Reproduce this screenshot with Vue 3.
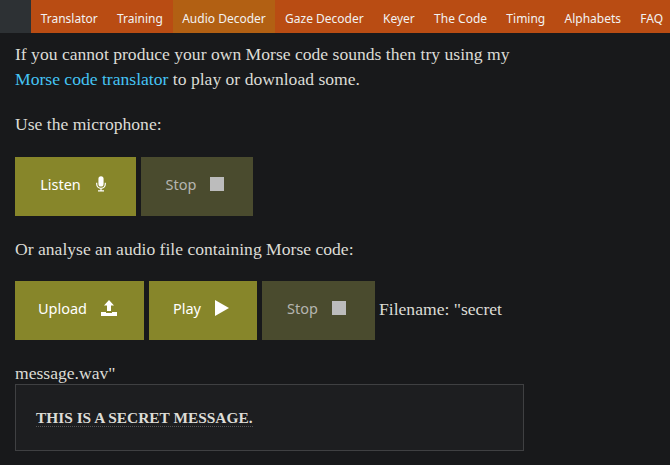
<script setup>
const navItems = [
  { label: 'Translator' },
  { label: 'Training' },
  { label: 'Audio Decoder', active: true },
  { label: 'Gaze Decoder' },
  { label: 'Keyer' },
  { label: 'The Code' },
  { label: 'Timing' },
  { label: 'Alphabets' },
  { label: 'FAQ' },
]
</script>

<template>
  <div class="page">
    <header class="topbar">
      <div class="logo-slot"></div>
      <nav class="nav">
        <a v-for="item in navItems" :key="item.label" class="nav-item" :class="{ active: item.active }">{{ item.label }}</a>
      </nav>
    </header>
    <main class="content">
      <p class="intro">If you cannot produce your own Morse code sounds then try using my<br><a class="link">Morse code translator</a> to play or download some.</p>
      <p class="label">Use the microphone:</p>
      <div class="btn-row">
        <button class="btn w-listen">Listen
          <svg class="icon" viewBox="0 0 14 18" width="12" height="16"><path fill="currentColor" d="M7 0a3 3 0 0 0-3 3v6a3 3 0 0 0 6 0V3a3 3 0 0 0-3-3z"/><path fill="none" stroke="currentColor" stroke-width="1.4" d="M2 7.5V9a5 5 0 0 0 10 0V7.5M7 14v3M3.5 17h7"/></svg>
        </button>
        <button class="btn off w-stop">Stop <span class="square"></span></button>
      </div>
      <p class="label second">Or analyse an audio file containing Morse code:</p>
      <div class="btn-row file-row">
        <button class="btn w-upload">Upload
          <svg class="icon" viewBox="0 0 16 16" width="16" height="16"><path fill="currentColor" d="M8 0l5 5.5H10V11H6V5.5H3zM0 12h5v1h6v-1h5v4H0z"/></svg>
        </button>
        <button class="btn w-play">Play
          <svg class="icon" viewBox="0 0 14 16" width="14" height="16"><path fill="currentColor" d="M0 0l14 8-14 8z"/></svg>
        </button>
        <button class="btn off w-stop2">Stop <span class="square"></span></button>
        <span class="filename">Filename: "secret</span>
      </div>
      <p class="filename-end">message.wav"</p>
      <div class="output"><span class="message">THIS IS A SECRET MESSAGE.</span></div>
    </main>
  </div>
</template>

<style>
html, body { margin: 0; background: #18191b; }
</style>

<style scoped>
.page {
  width: 670px;
  height: 465px;
  overflow: hidden;
  background: #18191b;
  color: #dcdcd6;
  font-family: "Liberation Serif", serif;
  font-size: 17.6px;
  line-height: 25px;
}
.topbar { display: flex; height: 33px; background: #b94c13; }
.logo-slot { flex: none; width: 31px; background: #2d3134; }
.nav { display: flex; flex: none; }
.nav-item {
  display: block;
  padding: 0 9.65px;
  color: #f2f2f2;
  font-family: "Noto Sans", sans-serif;
  font-size: 12px;
  line-height: 37px;
  white-space: nowrap;
}
.nav-item.active { background: #b26013; }
.content { width: 509px; padding: 9px 0 0 15px; }
p { margin: 0; }
.intro { margin-bottom: 20px; }
.link { color: #45c4f5; }
.label { margin-bottom: 20px; }
.label.second { margin-bottom: 19px; }
.btn-row { display: flex; gap: 5px; margin-bottom: 21px; }
.file-row { align-items: center; }
.btn {
  display: flex;
  flex: none;
  align-items: center;
  justify-content: center;
  gap: 14px;
  height: 59px;
  padding: 0 4px 5px 0;
  border: 0;
  background: #87862a;
  color: #fff;
  font-family: "Noto Sans", sans-serif;
  font-size: 14.5px;
}
.btn.off { background: #4a4b2e; color: #b5b5b0; }
.w-listen { width: 121px; }
.w-stop { width: 112px; }
.w-upload { width: 129px; }
.w-play { width: 108px; }
.w-stop2 { width: 113px; }
.filename { margin: -2px 0 0 -1px; white-space: nowrap; }
.square { width: 14px; height: 14px; background: #bcbcbc; }
.icon { display: block; }
.output {
  box-sizing: border-box;
  width: 509px;
  height: 67px;
  margin-top: -2px;
  padding: 20px;
  background: #1d1e20;
  border: 1px solid #3f4042;
}
.message { font-weight: 700; font-size: 15.4px; border-bottom: 1px dotted #555; }
</style>
